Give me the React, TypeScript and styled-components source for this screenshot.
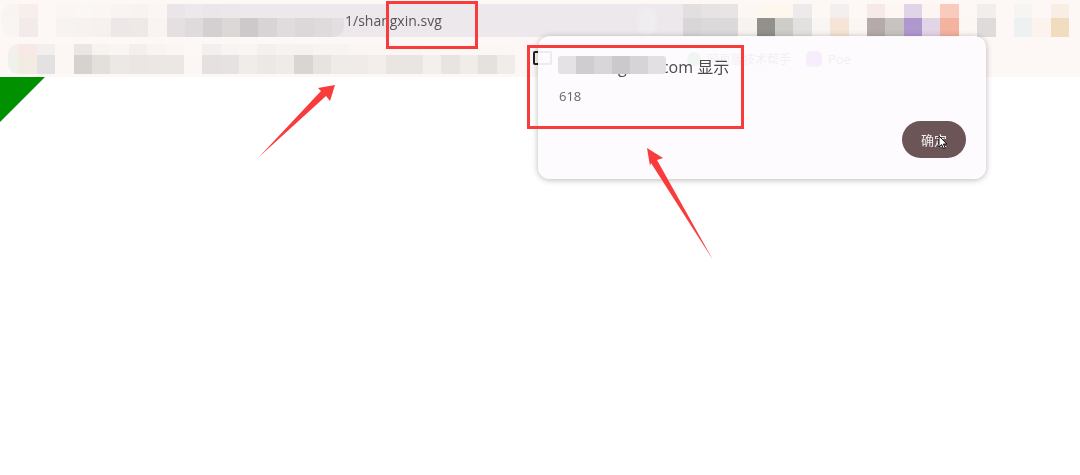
import styled, { createGlobalStyle } from "styled-components";

const GlobalStyle = createGlobalStyle`
  html, body {
    margin: 0;
    padding: 0;
    background: #fff;
  }
  body {
    width: 1080px;
    height: 475px;
    overflow: hidden;
    font-family: "Open Sans", "Noto Sans CJK SC", sans-serif;
  }
`;

// mosaic colours, [upper, lower] for every cell
const addressLeft: [string, string][] = [
  ["#f8f4f1", "#f9f5f2"], ["#f8efed", "#f3ebe9"], ["#fdf8f5", "#fdf8f5"], ["#fbf6f3", "#f7f3f1"],
  ["#fbf7f4", "#f7f2f0"], ["#fbf6f3", "#f6f0ee"], ["#f9f4f2", "#ede8e7"], ["#f8f3f1", "#eee8e7"],
  ["#fbf6f3", "#f9f4f2"], ["#e9e5e8", "#e4e0e1"], ["#ece8ec", "#dfdbdc"], ["#eae6e9", "#d4d0d1"],
  ["#ebe7ea", "#dcd8d8"], ["#ece8ec", "#cdc9ca"], ["#ece8ec", "#d8d4d5"], ["#ece8ec", "#e0dcdd"],
  ["#ece8ec", "#dcd8d9"], ["#ece8ec", "#dfdbdc"], ["#ece8ec", "#e3dfe1"],
];

const addressRight: [string, string][] = [
  ["#e2dfe0", "#d9d6d8"], ["#e7e3e5", "#dcd9db"], ["#e8e4e6", "#dcd9db"], ["#fcf7f4", "#f6f3f0"],
  ["#fef7ee", "#91908b"], ["#fdf7f0", "#cfcdca"], ["#eceaea", "#e3e1df"], ["#fdf8f4", "#f8f5f2"],
  ["#f2efee", "#f6e5d6"], ["#fdf8f5", "#fbf6f2"], ["#f6e9e7", "#b4aaa9"], ["#fdf6f2", "#c6c3c0"],
  ["#e0d5e8", "#b098cf"], ["#fdf5f1", "#e3d5e8"], ["#f9cbbd", "#f3b39e"], ["#fdf8f5", "#fcf7f3"],
  ["#f2eeec", "#dfdbda"], ["#fdf8f5", "#fdf8f5"], ["#f6f5f4", "#eef1f2"], ["#fdf8f5", "#fdf3ee"],
  ["#f9eee3", "#f1dcc0"],
];

const bookmarks: [string, string][] = [
  ["#f3efeb", "#eff1ec"], ["#f8e9e6", "#f3ece3"], ["#f2efec", "#e4e1e2"], ["#fcf7f5", "#fcf7f5"],
  ["#e9e6e5", "#d5d2d0"], ["#f7f3f0", "#e3dfdb"], ["#f9f5f2", "#ece8e6"], ["#f5eeec", "#ebe6e4"],
  ["#f9f4f1", "#ece7e5"], ["#fbf6f3", "#ebe7e4"], ["#fcf8f5", "#fcf7f4"], ["#f3efee", "#e6e1e0"],
  ["#f8f4f2", "#e6e2e1"], ["#f9f5f2", "#f0ecea"], ["#f4f0ee", "#ece8e6"], ["#f7f3f0", "#efebe9"],
  ["#f6f2ef", "#d9d5d3"], ["#f8f4f1", "#e6e3e1"], ["#f8f4f1", "#efebe9"], ["#fbf6f3", "#f0ebe9"],
  ["#fbf6f3", "#f3eeec"], ["#fbf6f3", "#e9e5e2"], ["#fbf6f3", "#e9e5e2"], ["#fcf7f4", "#f3efed"],
  ["#fcf7f4", "#e8e4e1"], ["#fcf7f4", "#f0ece9"], ["#fcf7f4", "#e5e1de"], ["#fcf7f4", "#f0ece9"],
];

const nameMask = ["#e4e2e4", "#cfcdcf", "#d8d6d8", "#cbc9cb", "#d6d4d6", "#e2e0e2"];

const Page = styled.div`
  position: relative;
  width: 1080px;
  height: 475px;
  overflow: hidden;
  background: #fff;
`;

const Browser = styled.header`
  height: 77px;
  padding-top: 4px;
  box-sizing: border-box;
  display: flex;
  flex-direction: column;
  gap: 7px;
  background: #fdf8f5;
`;

const AddressRow = styled.div`
  position: relative;
  height: 33px;
`;

const AddressBar = styled.div`
  width: 600px;
  height: 33px;
  margin-left: 155px;
  padding-left: 190px;
  box-sizing: border-box;
  display: flex;
  align-items: center;
  background: #ece8ec;
  border-radius: 17px 0 0 17px;
`;

const Url = styled.span`
  font-size: 14px;
  color: #555;
  filter: blur(0.3px);
`;

const AddressIcon = styled.span`
  width: 20px;
  height: 28px;
  margin-left: auto;
  margin-right: 98px;
  border-radius: 50%;
  background: #f0edf0;
  filter: blur(2px);
`;

const Mosaic = styled.div<{ $left?: number; $radius?: string; $upper?: number; $lower?: number; $first?: number; $width?: number }>`
  display: grid;
  grid-auto-flow: column;
  grid-template-rows: ${(p) => p.$upper ?? 14}px ${(p) => p.$lower ?? 19}px;
  grid-template-columns: ${(p) => (p.$first ? `${p.$first}px` : "none")};
  grid-auto-columns: 18.4px;
  width: ${(p) => (p.$width ? `${p.$width}px` : "auto")};
  overflow: hidden;
  border-radius: ${(p) => p.$radius ?? "0"};
  filter: blur(0.5px);
`;

const AddressMosaic = styled(Mosaic)`
  position: absolute;
  top: 0;
  left: ${(p) => p.$left ?? 0}px;
`;

const Cell = styled.i<{ $color: string }>`
  display: block;
  background: ${(p) => p.$color};
`;

const BookmarkRow = styled.div`
  display: flex;
  align-items: center;
  height: 30px;
  padding-left: 8px;
`;

const Folder = styled.span`
  width: 15px;
  height: 10px;
  margin-left: 18px;
  margin-top: -2px;
  border: 2px solid #222;
  border-radius: 2px;
`;

const Dot = styled.span<{ $color: string; $gap: number }>`
  width: 14px;
  height: 14px;
  margin-left: ${(p) => p.$gap}px;
  border-radius: 50%;
  background: ${(p) => p.$color};
`;

const PoeIcon = styled.span`
  width: 16px;
  height: 16px;
  margin-left: 15px;
  border-radius: 5px;
  background: #a03ae0;
`;

const Mark = styled.span<{ $size: number }>`
  margin-left: 6px;
  font-size: ${(p) => p.$size}px;
  color: #555;
`;

const Main = styled.main`
  display: block;
`;

const Triangle = styled.svg`
  display: block;
`;

const Dialog = styled.section`
  position: absolute;
  top: 36px;
  left: 538px;
  width: 448px;
  height: 143px;
  padding: 20px 20px 21px;
  box-sizing: border-box;
  display: flex;
  flex-direction: column;
  background: rgba(254, 251, 254, 0.93);
  border-radius: 12px;
  box-shadow: 0 1px 6px rgba(0, 0, 0, 0.28);
`;

const Title = styled.h2`
  position: relative;
  margin: 0;
  padding-left: 60px;
  font-size: 16px;
  line-height: 22px;
  font-weight: 400;
  color: #4a4a4a;
  filter: blur(0.25px);
`;

const Hidden = styled.span`
  margin-right: 30px;
`;

const NameMask = styled.div`
  position: absolute;
  top: 0;
  left: 0;
  display: flex;
  height: 18px;
  border-radius: 3px;
  overflow: hidden;
  filter: blur(0.6px);
`;

const NameCell = styled.i<{ $color: string }>`
  display: block;
  width: 18px;
  background: ${(p) => p.$color};
`;

const Message = styled.p`
  margin: 9px 0 0 1px;
  font-size: 13px;
  line-height: 18px;
  color: #666;
  filter: blur(0.25px);
`;

const Confirm = styled.button`
  position: relative;
  width: 64px;
  height: 37px;
  margin-top: auto;
  margin-left: auto;
  margin-right: 0;
  padding: 0;
  border: none;
  border-radius: 19px;
  background: #6b5557;
  color: #f4f0f0;
  font-family: inherit;
  font-size: 13px;
  filter: blur(0.3px);
`;

const Cursor = styled.svg`
  position: absolute;
  left: 36px;
  top: 14px;
`;

const Highlight = styled.div<{ $x: number; $y: number; $w: number; $h: number }>`
  position: absolute;
  left: ${(p) => p.$x}px;
  top: ${(p) => p.$y}px;
  width: ${(p) => p.$w}px;
  height: ${(p) => p.$h}px;
  box-sizing: border-box;
  border: 3px solid #f83c3c;
`;

const Arrows = styled.svg`
  position: absolute;
  inset: 0;
  pointer-events: none;
`;

const cells = (rows: [string, string][]) =>
  rows.map(([upper, lower], i) => [
    <Cell key={`u${i}`} $color={upper} />,
    <Cell key={`l${i}`} $color={lower} />,
  ]);

export default function App() {
  return (
    <Page>
      <GlobalStyle />
      <Browser>
        <AddressRow>
          <AddressBar>
            <Url>1/shangxin.svg</Url>
            <AddressIcon />
          </AddressBar>
          <AddressMosaic $left={1} $width={343} $radius="14px 0 10px 14px">
            {cells(addressLeft)}
          </AddressMosaic>
          <AddressMosaic $left={683}>{cells(addressRight)}</AddressMosaic>
        </AddressRow>
        <BookmarkRow>
          <Mosaic $upper={11} $lower={19} $first={10.4} $radius="10px 0 0 10px">
            {cells(bookmarks)}
          </Mosaic>
          <Folder />
          <Dot $color="#2fa84f" $gap={135} />
          <Mark $size={12}>网页版技术帮手</Mark>
          <PoeIcon />
          <Mark $size={13}>Poe</Mark>
        </BookmarkRow>
      </Browser>
      <Main>
        <Triangle width="45" height="46" viewBox="0 0 45 46">
          <polygon points="0,0 45,0 0,45" fill="#009000" />
        </Triangle>
      </Main>
      <Dialog>
        <Title>
          <Hidden>g</Hidden>.com 显示
          <NameMask>
            {nameMask.map((c) => (
              <NameCell key={c} $color={c} />
            ))}
          </NameMask>
        </Title>
        <Message>618</Message>
        <Confirm>
          确定
          <Cursor width="10" height="15" viewBox="0 0 10 15">
            <path d="M1 1 L1 12 L3.6 9.6 L5.4 13.6 L7.2 12.8 L5.4 9 L8.8 9 Z" fill="#fff" stroke="#111" strokeWidth="1" />
          </Cursor>
        </Confirm>
      </Dialog>
      <Highlight $x={386} $y={1} $w={92} $h={48} />
      <Highlight $x={527} $y={45} $w={217} $h={84} />
      <Arrows width="1080" height="475" viewBox="0 0 1080 475">
        <polygon points="335,85 330,101 326,96 259,157 321,91 318,88" fill="#f83c3c" />
        <polygon points="647,148 663,158 657,160 713,260 651,163 650,166" fill="#f83c3c" />
      </Arrows>
    </Page>
  );
}
